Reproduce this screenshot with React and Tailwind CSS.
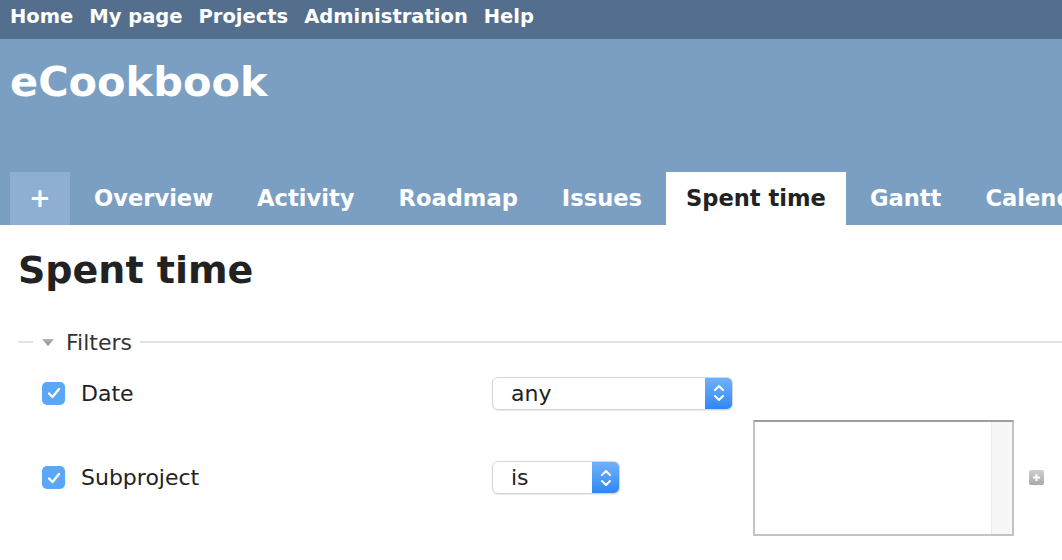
import React from "react";

function Checkbox() {
  return (
    <div className="w-[23px] h-[23px] shrink-0 rounded-[5px] bg-[#5aa6f7] flex items-center justify-center">
      <svg width="14" height="12" viewBox="0 0 14 12">
        <path d="M2 6.5 L5.5 10 L12 2" stroke="white" strokeWidth="2.4" fill="none" strokeLinecap="round" strokeLinejoin="round" />
      </svg>
    </div>
  );
}

function Select({ value, width }) {
  return (
    <div
      className="h-[33px] shrink-0 flex rounded-[6px] border border-[#d6d6d6] bg-white shadow-[0_1px_1px_rgba(0,0,0,0.08)] overflow-hidden"
      style={{ width }}
    >
      <div className="flex-1 flex items-center pl-[18px] text-[22px] text-[#222]">{value}</div>
      <div className="w-[27px] bg-gradient-to-b from-[#6fb2fb] to-[#2f86f6] flex items-center justify-center">
        <svg width="14" height="22" viewBox="0 0 14 22">
          <path d="M3 8 L7 4 L11 8" stroke="white" strokeWidth="2" fill="none" strokeLinecap="round" strokeLinejoin="round" />
          <path d="M3 14 L7 18 L11 14" stroke="white" strokeWidth="2" fill="none" strokeLinecap="round" strokeLinejoin="round" />
        </svg>
      </div>
    </div>
  );
}

export default function App() {
  const top = ["Home", "My page", "Projects", "Administration", "Help"];
  const tabs = ["Overview", "Activity", "Roadmap", "Issues", "Spent time", "Gantt", "Calendar"];
  return (
    <div className="w-[1062px] h-[560px] overflow-hidden bg-white font-['DejaVu_Sans',Verdana,sans-serif]">
      <div className="h-[39px] bg-[#536f8d] flex items-start pt-[4px] pl-[10px] gap-[16px] text-white font-bold text-[19.5px] leading-[26px] whitespace-nowrap">
        {top.map((t) => (
          <span key={t}>{t}</span>
        ))}
      </div>
      <div className="h-[186px] bg-[#7b9ec3] flex flex-col">
        <h1 className="pl-[10px] pt-[18px] text-[41.5px] leading-[50px] font-bold text-white">eCookbook</h1>
        <div className="mt-auto flex pl-[10px] gap-[4px] h-[53px] whitespace-nowrap">
          <div className="w-[60px] shrink-0 bg-[#8eaed4] flex items-center justify-center text-white font-bold text-[26px]">+</div>
          {tabs.map((t) => (
            <div
              key={t}
              className={
                "px-[20px] shrink-0 flex items-center font-bold text-[22.6px] " +
                (t === "Spent time" ? "bg-white text-[#222]" : "text-white")
              }
            >
              {t}
            </div>
          ))}
        </div>
      </div>
      <div className="pl-[18px]">
        <h2 className="pt-[22px] text-[38px] leading-[46px] font-bold text-[#222]">Spent time</h2>
        <div className="mt-[34px] flex items-center h-[30px]">
          <div className="w-[15px] h-[2px] bg-[#e2e2e2]" />
          <div className="px-[8px] flex items-center gap-[11px] text-[22px] text-[#333]">
            <svg width="14" height="10" viewBox="0 0 14 10">
              <defs>
                <linearGradient id="tri" x1="0" y1="0" x2="0" y2="1">
                  <stop offset="0" stopColor="#b5b5b5" />
                  <stop offset="1" stopColor="#8a8a8a" />
                </linearGradient>
              </defs>
              <path d="M1 2 L13 2 L7 9 Z" fill="url(#tri)" />
            </svg>
            <span>Filters</span>
          </div>
          <div className="flex-1 h-[2px] bg-[#e2e2e2]" />
        </div>
        <div className="mt-[14px] pl-[24px]">
          <div className="flex items-center h-[44px]">
            <div className="w-[450px] shrink-0 flex items-center gap-[16px]">
              <Checkbox />
              <span className="text-[22px] text-[#222]">Date</span>
            </div>
            <Select value="any" width={241} />
          </div>
          <div className="flex items-center h-[125px]">
            <div className="w-[450px] shrink-0 flex items-center gap-[16px]">
              <Checkbox />
              <span className="text-[22px] text-[#222]">Subproject</span>
            </div>
            <Select value="is" width={128} />
            <div className="ml-[133px] shrink-0 w-[261px] h-[116px] border-2 border-[#c4c4c4] border-t-[#9e9e9e] flex">
              <div className="flex-1 bg-white" />
              <div className="w-[21px] bg-[#f7f7f7] border-l border-[#ebebeb]" />
            </div>
            <div className="ml-[15px] shrink-0 w-[15px] h-[15px] rounded-[2px] bg-gradient-to-b from-[#cfcfcf] to-[#a9a9a9] flex items-center justify-center">
              <svg width="9" height="9" viewBox="0 0 9 9">
                <path d="M4.5 1 V8 M1 4.5 H8" stroke="white" strokeWidth="2" />
              </svg>
            </div>
          </div>
        </div>
      </div>
    </div>
  );
}
